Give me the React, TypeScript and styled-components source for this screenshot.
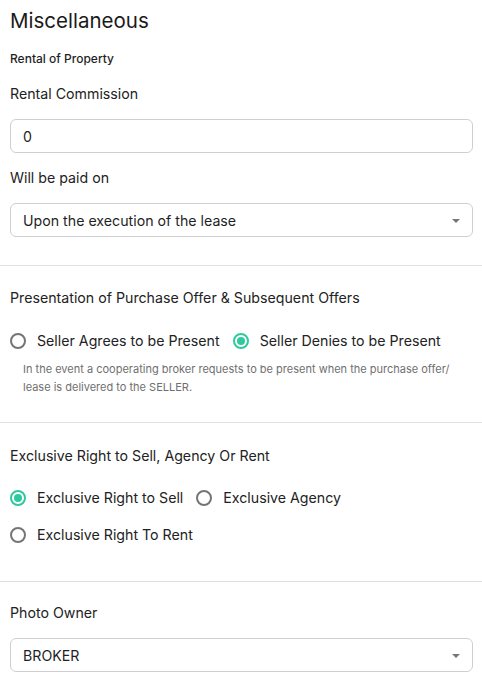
import styled, { createGlobalStyle } from 'styled-components';

const GlobalStyle = createGlobalStyle`
	body {
		margin: 0;
		background: #fff;
		font-family: Inter, 'Noto Sans', sans-serif;
		color: #1f1f1f;
	}
`;

const Page = styled.div`
	display: flex;
	flex-direction: column;
	width: 482px;
`;

const Section = styled.section<{ $bottom: number }>`
	display: flex;
	flex-direction: column;
	padding: 0 9px ${(p) => p.$bottom}px 10px;
	border-bottom: 1px solid #e0e0e0;

	&:last-child {
		border-bottom: 0;
	}
`;

const Title = styled.h2`
	margin: 9px 0 0;
	font-size: 20.5px;
	font-weight: 400;
	line-height: 24px;
	color: #1a1a1a;
`;

const SubTitle = styled.div`
	margin-top: 18px;
	font-size: 12px;
	font-weight: 500;
	line-height: 16px;
`;

const Label = styled.label<{ $top: number }>`
	display: block;
	margin-top: ${(p) => p.$top}px;
	font-size: 14.2px;
	line-height: 18px;
	color: #222;
`;

const Field = styled.div`
	position: relative;
	display: flex;
	align-items: center;
	height: 34px;
	margin-top: 16px;
	padding: 0 12px;
	border: 1px solid #cfcfcf;
	border-radius: 6px;
	font-size: 14.2px;
	color: #1f1f1f;
	box-sizing: border-box;
`;

const Caret = styled.span`
	position: absolute;
	right: 12px;
	top: 15px;
	width: 0;
	height: 0;
	border-left: 4px solid transparent;
	border-right: 4px solid transparent;
	border-top: 4px solid #777;
`;

const RadioRow = styled.div<{ $top: number }>`
	display: flex;
	gap: 13px;
	margin-top: ${(p) => p.$top}px;
`;

const Option = styled.label`
	display: flex;
	align-items: center;
	gap: 11px;
	font-size: 14.2px;
	line-height: 18px;
	color: #222;
`;

const Circle = styled.span<{ $on?: boolean }>`
	display: inline-flex;
	align-items: center;
	justify-content: center;
	width: 16px;
	height: 16px;
	border-radius: 50%;
	border: 2px solid ${(p) => (p.$on ? '#2ec99e' : '#757575')};
	box-sizing: border-box;

	&::after {
		content: '';
		width: 8px;
		height: 8px;
		border-radius: 50%;
		background: ${(p) => (p.$on ? '#2ec99e' : 'transparent')};
	}
`;

const Help = styled.p`
	margin: 10px 0 0 13px;
	font-size: 11px;
	line-height: 18px;
	color: #6f6f6f;
`;

const Radio = ({ label, on }: { label: string; on?: boolean }) => (
	<Option>
		<Circle $on={on} />
		{label}
	</Option>
);

const App = () => (
	<Page>
		<GlobalStyle />
		<Section $bottom={28}>
			<Title>Miscellaneous</Title>
			<SubTitle>Rental of Property</SubTitle>
			<Label $top={18}>Rental Commission</Label>
			<Field>0</Field>
			<Label $top={16}>Will be paid on</Label>
			<Field>
				Upon the execution of the lease
				<Caret />
			</Field>
		</Section>
		<Section $bottom={26}>
			<Label $top={23}>Presentation of Purchase Offer &amp; Subsequent Offers</Label>
			<RadioRow $top={25}>
				<Radio label="Seller Agrees to be Present" />
				<Radio label="Seller Denies to be Present" on />
			</RadioRow>
			<Help>
				In the event a cooperating broker requests to be present when the purchase offer/
				lease is delivered to the SELLER.
			</Help>
		</Section>
		<Section $bottom={37}>
			<Label $top={24}>Exclusive Right to Sell, Agency Or Rent</Label>
			<RadioRow $top={24}>
				<Radio label="Exclusive Right to Sell" on />
				<Radio label="Exclusive Agency" />
			</RadioRow>
			<RadioRow $top={19}>
				<Radio label="Exclusive Right To Rent" />
			</RadioRow>
		</Section>
		<Section $bottom={0}>
			<Label $top={22}>Photo Owner</Label>
			<Field>
				BROKER
				<Caret />
			</Field>
		</Section>
	</Page>
);

export default App;
